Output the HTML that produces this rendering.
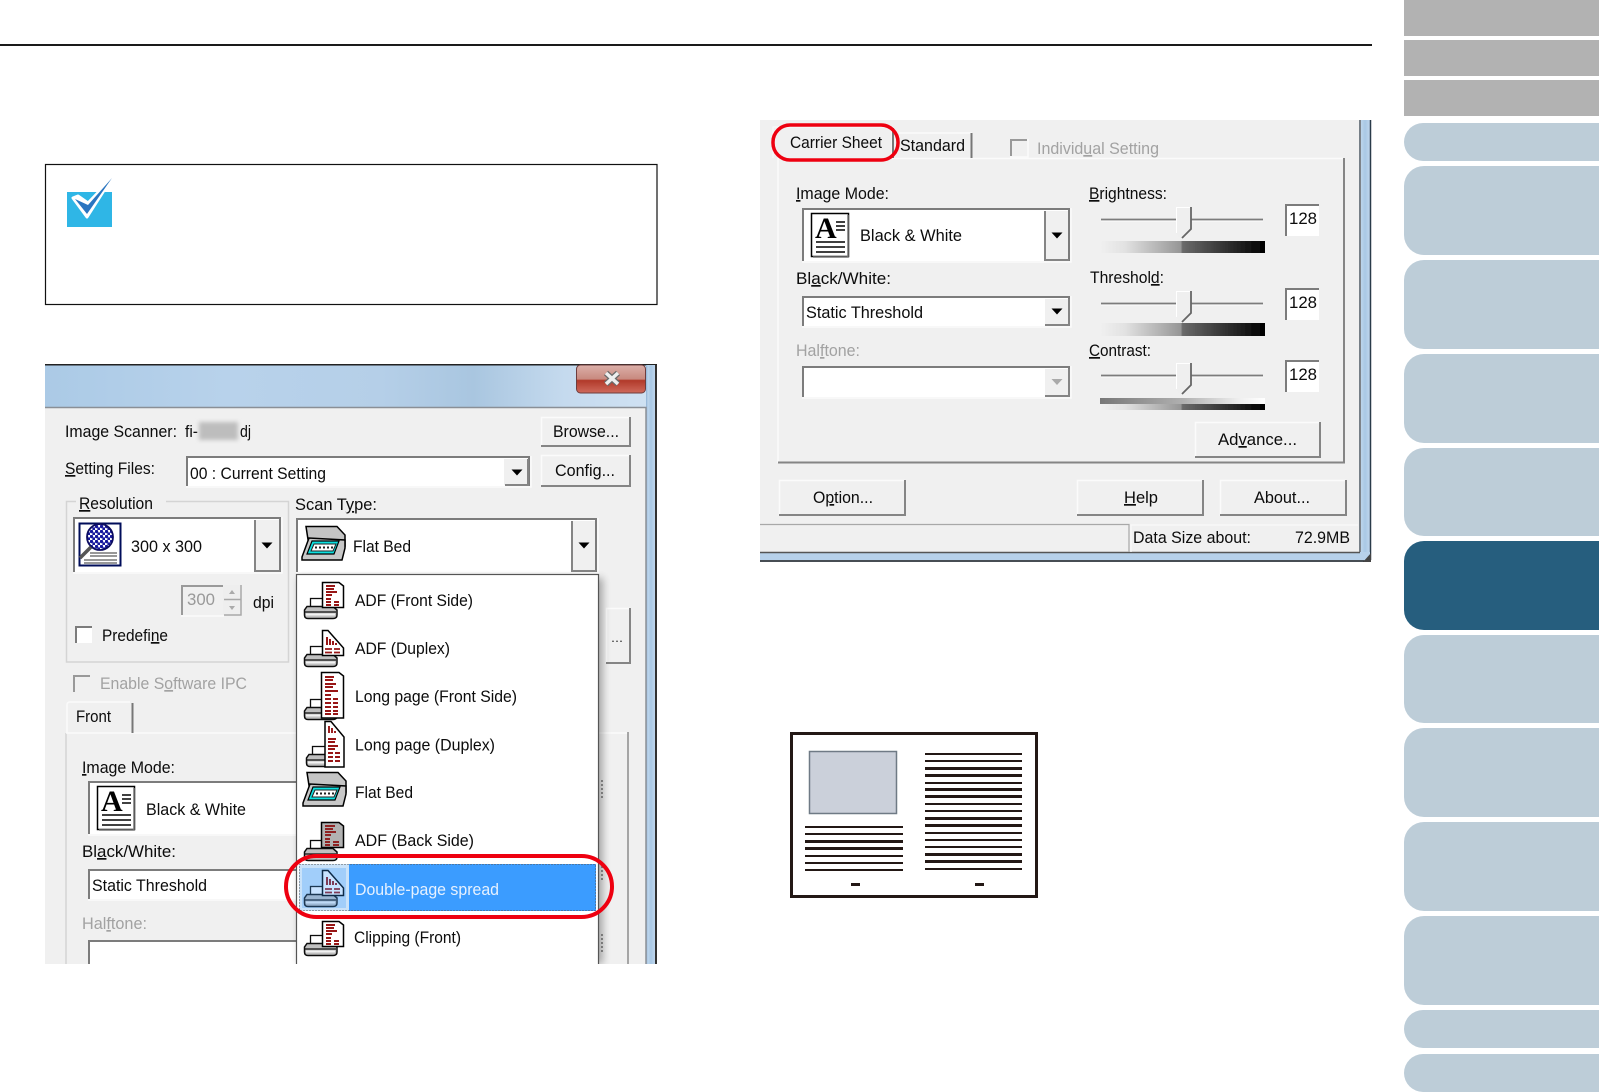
<!DOCTYPE html>
<html><head><meta charset="utf-8"><title>Scan</title>
<style>
html,body{margin:0;padding:0;background:#fff;width:1599px;height:1092px;overflow:hidden}
svg{display:block}
text{font-family:"Liberation Sans",sans-serif;font-size:17px;fill:#080808}
text.g{fill:#a2a2a2}
.f{fill:none;stroke:#7c7c7c;stroke-width:2}
.l{fill:none;stroke:#fbfbfb;stroke-width:1.5}
.d{fill:none;stroke:#858585;stroke-width:2}
.e{fill:none;stroke:#d4d4d4;stroke-width:1.5}
</style></head><body>
<svg xmlns="http://www.w3.org/2000/svg" width="1599" height="1092" viewBox="0 0 1599 1092">
<defs>
<filter id="b" filterUnits="userSpaceOnUse" x="0" y="100" width="1400" height="900"><feGaussianBlur stdDeviation="0.38"/></filter>
<filter id="bb" x="-30%" y="-30%" width="160%" height="160%"><feGaussianBlur stdDeviation="4"/></filter>
<filter id="bs" x="-30%" y="-30%" width="160%" height="160%"><feGaussianBlur stdDeviation="2"/></filter>
<linearGradient id="tg" x1="0" x2="1" y1="0" y2="0"><stop offset="0" stop-color="#abcae6"/><stop offset=".3" stop-color="#b8d2eb"/><stop offset=".55" stop-color="#b5cfe8"/><stop offset=".7" stop-color="#a9c6e0"/><stop offset=".85" stop-color="#c5daee"/><stop offset="1" stop-color="#d0e2f3"/></linearGradient>
<linearGradient id="cg" x1="0" x2="0" y1="0" y2="1"><stop offset="0" stop-color="#dcb0aa"/><stop offset=".5" stop-color="#c88a80"/><stop offset=".55" stop-color="#b1392a"/><stop offset="1" stop-color="#cf6a5c"/></linearGradient>
<linearGradient id="bar" x1="0" x2="1" y1="0" y2="0"><stop offset="0" stop-color="#f0f0f0"/><stop offset=".15" stop-color="#e2e2e2"/><stop offset=".49" stop-color="#969696"/><stop offset=".5" stop-color="#6a6a6a"/><stop offset="1" stop-color="#000"/></linearGradient>
<linearGradient id="bar2" x1="0" x2="1" y1="0" y2="0"><stop offset="0" stop-color="#777"/><stop offset=".5" stop-color="#b0b0b0"/><stop offset=".85" stop-color="#f0f0f0"/><stop offset="1" stop-color="#fff"/></linearGradient>
<linearGradient id="fr" x1="0" x2="1" y1="0" y2="0"><stop offset="0" stop-color="#8fb2d4"/><stop offset=".2" stop-color="#bcd5ec"/><stop offset=".5" stop-color="#a9c8e5"/><stop offset="1" stop-color="#c5daef"/></linearGradient>
<pattern id="dots" width="5" height="5" patternUnits="userSpaceOnUse"><rect width="5" height="5" fill="#fff"/><circle cx="1.5" cy="1.5" r="1.7" fill="#14189c"/><circle cx="4" cy="4" r="1.7" fill="#14189c"/></pattern>

<g id="base"><rect x="6.5" y=".5" width="16" height="9" fill="#fff" stroke="#111" stroke-width="1.300"/><path d="M3 8.500H29L33 12V17Q33 20.500 29 20.500H4Q.5 20.500 .5 17V12Z" fill="#c0c0c0" stroke="#111" stroke-width="1.500"/><path d="M1 14H32" stroke="#111" stroke-width="1.200"/><path d="M2 16.500H31" stroke="#f2f2f2" stroke-width="2"/></g>
<g id="pf"><path d="M.5 .5H17L21.500 4V25.500H.5Z" fill="#fff" stroke="#000" stroke-width="1.500"/><path d="M4 4H13M4 7H12M4 10H15M4 13H10M4 17H9M4 20H9M12 20H17M4 23H9M12 23H17" stroke="#981616" stroke-width="2"/></g>
<g id="pd"><path d="M.5 .5H6L21.500 18V25.500H.5Z" fill="#fff" stroke="#000" stroke-width="1.500"/><path d="M5 7V15M8 9V15M11 11V15M14 13V15" stroke="#981616" stroke-width="2"/><path d="M3 19H10M12 19H18M3 22.500H10M12 22.500H18" stroke="#981616" stroke-width="1.800"/></g>
<g id="flat"><path d="M5 .5H36L44 9L44 20L8 20Z" fill="#c4c4c4" stroke="#000" stroke-width="1.500"/><path d="M8 12L1 31V34H41L44 22V14Z" fill="#c8c8c8" stroke="#000" stroke-width="1.500"/><path d="M11 15H38L33 28H6Z" fill="#0fe0e0" stroke="#000" stroke-width="1.200"/><path d="M13 18H35L32 25H10Z" fill="#fff" stroke="#222"/><path d="M14 21.500H32" stroke="#222" stroke-dasharray="2 2" stroke-width="2"/></g>
<g id="aicon"><rect x=".5" y=".5" width="37" height="43" fill="#fff" stroke="#000" stroke-width="1.500"/><path d="M37 2V44H2" fill="none" stroke="#777" stroke-width="1.500"/><text x="4" y="25" style="font-family:'Liberation Serif',serif;font-weight:bold;font-size:30px;fill:#000">A</text><path d="M25 9H34M25 13H34M25 17H34M5 29H34M5 34H34M5 39H34" stroke="#000" stroke-width="1.500"/></g>
<g id="thumb"><path d="M0 .5H15V22L4 31 0 26Z" fill="#efefef"/><path d="M.5 26V.5H14" fill="none" stroke="#fff"/><path d="M15 0V22L6 31" fill="none" stroke="#666" stroke-width="1.800"/></g>
<path id="arr" d="M-5.500 -2.500H5.500L0 3.500Z" fill="#000"/>
</defs>

<rect width="1599" height="1092" fill="#fff"/>
<rect x="0" y="44" width="1372" height="2" fill="#1a1a1a"/>

<!-- note box -->
<rect x="45.500" y="164.500" width="611.500" height="140" fill="#fff" stroke="#111" stroke-width="1.200"/>
<rect x="67" y="192" width="45" height="35" fill="#2fb6e6"/>
<path d="M73 198L87 217L112 178L88 203L78 196Z" fill="#fff" stroke="#fff" stroke-width="3" stroke-linejoin="round"/>
<path d="M75 199L88 205L112 178L87 214Z" fill="#2a75c0"/>

<!-- left dialog -->
<g filter="url(#b)">
<rect x="45" y="365" width="612" height="42" fill="url(#tg)"/>
<rect x="45" y="364" width="612" height="1.500" fill="#222"/>
<rect x="646" y="365" width="10" height="599" fill="url(#fr)"/>
<rect x="655" y="365" width="2" height="599" fill="#333"/>
<rect x="45" y="407" width="601" height="557" fill="#f0f0f0"/>
<path d="M45 407.500H646V964" fill="none" stroke="#8a8f96" stroke-width="1.500"/>
<rect x="576.500" y="365" width="69" height="28" rx="4" fill="url(#cg)" stroke="#6e3d3d"/>
<path d="M606 373L618 384M618 373L606 384" stroke="#6a6a6a" stroke-width="6"/>
<path d="M606 373L618 384M618 373L606 384" stroke="#eee" stroke-width="3.500"/>

<text x="65" y="437" textLength="112" lengthAdjust="spacingAndGlyphs">Image Scanner:</text>
<text x="185" y="437" textLength="13" lengthAdjust="spacingAndGlyphs">fi-</text>
<rect x="199" y="422" width="39" height="18" fill="#bdbdbd" filter="url(#bs)"/>
<text x="240" y="437" textLength="11" lengthAdjust="spacingAndGlyphs">dj</text>
<text x="65" y="474" textLength="90" lengthAdjust="spacingAndGlyphs"><tspan text-decoration="underline">S</tspan>etting Files:</text>

<rect x="187" y="457" width="342" height="29" fill="#fff"/>
<path class="f" d="M187 486V457H529V486"/><path class="l" d="M186 487H531V456"/>
<rect x="504" y="459" width="24" height="26" fill="#f0f0f0"/><path class="d" d="M505 485H528V459"/>
<use href="#arr" x="517" y="472"/>
<text x="190" y="479" textLength="136" lengthAdjust="spacingAndGlyphs">00 : Current Setting</text>

<rect x="541.500" y="417.500" width="89" height="29" fill="#f0f0f0"/><path class="l" d="M541.500 447V417.500H630"/><path class="d" d="M541 446H630V417"/>
<text x="553" y="437" textLength="66" lengthAdjust="spacingAndGlyphs">Browse...</text>
<rect x="541.500" y="455.500" width="89" height="31" fill="#f0f0f0"/><path class="l" d="M541.500 487V455.500H630"/><path class="d" d="M541 486H630V455"/>
<text x="555" y="476" textLength="60" lengthAdjust="spacingAndGlyphs">Config...</text>

<!-- resolution group -->
<path class="e" d="M76 501.500H66.500V662H288.500V501.500H166"/>
<text x="79" y="509" textLength="74" lengthAdjust="spacingAndGlyphs"><tspan text-decoration="underline">R</tspan>esolution</text>
<rect x="74" y="518" width="207" height="54" fill="#fff"/>
<path class="f" d="M74 572V518H280V572"/><path class="l" d="M73 573H282V517"/>
<rect x="255" y="520" width="24" height="51" fill="#f0f0f0"/><path class="d" d="M255 520V571H280"/>
<use href="#arr" x="267" y="545"/>
<rect x="79.500" y="523.500" width="41" height="42" fill="#fff" stroke="#04085a" stroke-width="2"/>
<path d="M90 553H117M90 556H117M84 560H117M84 563H117" stroke="#333"/>
<circle cx="100" cy="537" r="13" fill="url(#dots)" stroke="#0c0c60" stroke-width="1.800"/>
<path d="M91 547L80 558" stroke="#555" stroke-width="3.500"/>
<text x="131" y="552" textLength="71" lengthAdjust="spacingAndGlyphs">300 x 300</text>
<rect x="182" y="586" width="41" height="29" fill="#f0f0f0"/><path d="M182 615V586H223" fill="none" stroke="#9a9a9a" stroke-width="2"/><path class="l" d="M181 616H224"/>
<text x="187" y="605" textLength="28" lengthAdjust="spacingAndGlyphs" style="fill:#999">300</text>
<rect x="223" y="585" width="18" height="15" fill="#eee"/><rect x="223" y="600" width="18" height="15" fill="#eee"/>
<path d="M241 585V615H224M224 599.500H241" fill="none" stroke="#a8a8a8" stroke-width="1.500"/>
<path d="M232 590L229 594H235ZM232 610L229 606H235Z" fill="#aaa"/>
<text x="253" y="608" textLength="21" lengthAdjust="spacingAndGlyphs">dpi</text>
<rect x="76" y="627" width="16" height="16" fill="#fff"/><path d="M76 643V627H92" fill="none" stroke="#7c7c7c" stroke-width="2"/>
<text x="102" y="641" textLength="66" lengthAdjust="spacingAndGlyphs">Predefi<tspan text-decoration="underline">n</tspan>e</text>

<text x="295" y="510" textLength="82" lengthAdjust="spacingAndGlyphs">Scan T<tspan text-decoration="underline">y</tspan>pe:</text>

<rect x="74" y="676" width="16" height="16" fill="#f0f0f0"/><path d="M74 692V676H90" fill="none" stroke="#999" stroke-width="2"/>
<text x="100" y="689" class="g" textLength="147" lengthAdjust="spacingAndGlyphs">Enable S<tspan text-decoration="underline">o</tspan>ftware IPC</text>

<!-- tab -->
<path class="e" d="M66 964V733"/>
<path d="M66 733H628" stroke="#fafafa" stroke-width="1.500"/>
<path d="M67 733V705Q67 702 70 702H130" fill="none" stroke="#fafafa" stroke-width="1.500"/>
<path d="M132.500 703V733" stroke="#777" stroke-width="2"/>
<text x="76" y="722" textLength="35" lengthAdjust="spacingAndGlyphs">Front</text>
<path d="M628 732V964" stroke="#8c8c8c" stroke-width="1.500"/>

<text x="82" y="773" textLength="93" lengthAdjust="spacingAndGlyphs"><tspan text-decoration="underline">I</tspan>mage Mode:</text>
<rect x="89" y="782" width="210" height="52" fill="#fff"/><path class="f" d="M89 834V782H296"/><path class="l" d="M88 835H296"/>
<use href="#aicon" x="97" y="786"/>
<text x="146" y="815" textLength="100" lengthAdjust="spacingAndGlyphs">Black &amp; White</text>
<text x="82" y="857" textLength="94" lengthAdjust="spacingAndGlyphs">Bl<tspan text-decoration="underline">a</tspan>ck/White:</text>
<rect x="89" y="870" width="210" height="29" fill="#fff"/><path class="f" d="M89 899V870H296"/><path class="l" d="M88 900H296"/>
<text x="92" y="891" textLength="115" lengthAdjust="spacingAndGlyphs">Static Threshold</text>
<text x="82" y="929" class="g" textLength="65" lengthAdjust="spacingAndGlyphs">Hal<tspan text-decoration="underline">f</tspan>tone:</text>
<rect x="89" y="941" width="210" height="23" fill="#fff"/><path class="f" d="M89 964V941H296"/>

<!-- ... button -->
<rect x="606" y="608" width="25" height="55" fill="#f0f0f0"/><path class="l" d="M606.500 663V608.500H630"/><path class="d" d="M606 663H630V608"/>
<text x="611" y="642" textLength="12" lengthAdjust="spacingAndGlyphs" style="font-size:13px;fill:#333">...</text>
<path d="M602 780V800M602 862V882M602 934V954" stroke="#777" stroke-dasharray="2 2" stroke-width="1.500"/>

<!-- scan type combo -->
<rect x="297" y="519" width="300" height="53" fill="#fff"/>
<path class="f" d="M297 572V519H596V572"/><path class="l" d="M296 573H598V518"/>
<rect x="572" y="521" width="23" height="50" fill="#f0f0f0"/><path class="d" d="M572 521V571H596"/>
<use href="#arr" x="584" y="545"/>
<use href="#flat" x="301" y="526"/>
<text x="353" y="552" textLength="58" lengthAdjust="spacingAndGlyphs">Flat Bed</text>

<!-- dropdown -->
<rect x="299" y="578" width="304" height="386" fill="#000" opacity=".3" filter="url(#bb)"/>
<rect x="296.500" y="574.500" width="302" height="400" fill="#fff" stroke="#555" stroke-width="1.200"/>

<use href="#base" x="304" y="598"/><use href="#pf" x="322" y="582"/>
<text x="355" y="606" textLength="118" lengthAdjust="spacingAndGlyphs">ADF (Front Side)</text>
<use href="#base" x="304" y="646"/><use href="#pd" x="322" y="630"/>
<text x="355" y="654" textLength="95" lengthAdjust="spacingAndGlyphs">ADF (Duplex)</text>
<use href="#base" x="304" y="699"/><path d="M321.500 672.500H339L343.500 676V718H321.500Z" fill="#fff" stroke="#000" stroke-width="1.500"/>
<path d="M325 677H334M325 680H333M325 684H336M325 687H333M325 691H338M325 695H331M325 699H331M333 699H338M325 703H331M333 703H338M325 707H331M333 707H338M325 711H331M333 711H338M325 714H331M333 714H338" stroke="#981616" stroke-width="1.900"/>
<text x="355" y="702" textLength="162" lengthAdjust="spacingAndGlyphs">Long page (Front Side)</text>
<use href="#base" x="306" y="746"/><path d="M325 721.500H331L344 737V767H325Z" fill="#fff" stroke="#000" stroke-width="1.500"/>
<path d="M329 726V733M332 728V733M335 731V733M328 739H336M328 742H335M328 746H338M328 749H335M328 753H333M335 753H340M328 757H333M335 757H340M328 761H333M335 761H340" stroke="#981616" stroke-width="1.900"/>
<text x="355" y="750.500" textLength="140" lengthAdjust="spacingAndGlyphs">Long page (Duplex)</text>
<use href="#flat" x="302" y="772"/>
<text x="355" y="798" textLength="58" lengthAdjust="spacingAndGlyphs">Flat Bed</text>
<use href="#base" x="304" y="840"/><path d="M321.500 822.500H339L343.500 826V847.500H321.500Z" fill="#b2b2b2" stroke="#000" stroke-width="1.500"/>
<path d="M325 826H335M325 829H333M325 832H336M325 835H331M325 839H330M325 842H330M333 842H339M325 845H330M333 845H339" stroke="#8a1010" stroke-width="1.800"/>
<text x="355" y="846" textLength="119" lengthAdjust="spacingAndGlyphs">ADF (Back Side)</text>

<rect x="299" y="864" width="297" height="47" fill="#3b9cff"/>
<rect x="299" y="864" width="50" height="47" fill="#c9e2f9"/>
<rect x="299.500" y="864.500" width="296" height="46" fill="none" stroke="#555" stroke-dasharray="1 2"/>
<use href="#base" x="304" y="886"/><use href="#pd" x="322" y="870"/>
<rect x="302" y="868" width="44" height="40" fill="#3b9cff" opacity=".28"/>
<text x="355" y="895" textLength="144" lengthAdjust="spacingAndGlyphs" style="fill:#e6f1ff">Double-page spread</text>

<use href="#base" x="304" y="935"/><use href="#pf" x="322" y="921"/>
<text x="354" y="943" textLength="107" lengthAdjust="spacingAndGlyphs">Clipping (Front)</text>
<rect x="290" y="964" width="330" height="14" fill="#fff"/>
</g>
<rect x="286" y="856" width="326" height="61" rx="30.500" fill="none" stroke="#ee0010" stroke-width="4"/>

<!-- right dialog -->
<g filter="url(#b)">
<rect x="760" y="120" width="600" height="432" fill="#f0f0f0"/>
<rect x="1359" y="120" width="12" height="442" fill="url(#fr)"/>
<path d="M1360 120V552" stroke="#6d6d6d" stroke-width="1.500"/>
<path d="M1370.500 120V560" stroke="#2a3a4a" stroke-width="1.500"/>
<rect x="760" y="552" width="610" height="10" fill="#b7d1ea"/>
<path d="M760 552.500H1360" stroke="#555" stroke-width="1.500"/>
<path d="M760 561H1371" stroke="#222" stroke-width="1.500"/>
<path d="M1371 553V562H1363Z" fill="#444"/>

<!-- group pane -->
<path class="l" d="M778 463V158.500H1343"/>
<path d="M778 462.500H1344V158" fill="none" stroke="#858585" stroke-width="2"/>
<!-- tabs -->
<path d="M773 158V127H892V158" fill="#f0f0f0" stroke="#fbfbfb"/>
<text x="790" y="148" textLength="92" lengthAdjust="spacingAndGlyphs">Carrier Sheet</text>
<path d="M893 128V158" stroke="#777" stroke-width="2"/>
<path d="M899 133H972" stroke="#fbfbfb" stroke-width="1.500"/>
<path d="M971.500 133V158" stroke="#777" stroke-width="2"/>
<text x="900" y="151" textLength="65" lengthAdjust="spacingAndGlyphs">Standard</text>
<rect x="1011" y="140" width="16" height="16" fill="#f0f0f0"/><path d="M1011 156V140H1027" fill="none" stroke="#999" stroke-width="2"/><path class="l" d="M1010 157H1028V139"/>
<text x="1037" y="154" class="g" textLength="122" lengthAdjust="spacingAndGlyphs">Individ<tspan text-decoration="underline">u</tspan>al Setting</text>

<text x="796" y="199" textLength="93" lengthAdjust="spacingAndGlyphs"><tspan text-decoration="underline">I</tspan>mage Mode:</text>
<rect x="803" y="209" width="266" height="52" fill="#fff"/><path class="f" d="M803 261V209H1069V261"/><path class="l" d="M802 262H1071V208"/>
<rect x="1045" y="211" width="23" height="49" fill="#f0f0f0"/><path class="d" d="M1045 211V260H1069"/>
<use href="#arr" x="1057" y="235"/>
<use href="#aicon" x="811" y="213"/>
<text x="860" y="241" textLength="102" lengthAdjust="spacingAndGlyphs">Black &amp; White</text>

<text x="796" y="284" textLength="95" lengthAdjust="spacingAndGlyphs">Bl<tspan text-decoration="underline">a</tspan>ck/White:</text>
<rect x="803" y="297" width="266" height="29" fill="#fff"/><path class="f" d="M803 326V297H1069V326"/><path class="l" d="M802 327H1071V296"/>
<rect x="1045" y="299" width="23" height="26" fill="#f0f0f0"/><path class="d" d="M1045 325H1069V299"/>
<use href="#arr" x="1057" y="311"/>
<text x="806" y="318" textLength="117" lengthAdjust="spacingAndGlyphs">Static Threshold</text>

<text x="796" y="356" class="g" textLength="64" lengthAdjust="spacingAndGlyphs">Hal<tspan text-decoration="underline">f</tspan>tone:</text>
<rect x="803" y="367" width="266" height="30" fill="#fff"/><path class="f" d="M803 397V367H1069V397"/><path class="l" d="M802 398H1071V366"/>
<rect x="1045" y="369" width="23" height="27" fill="#f0f0f0"/><path class="d" d="M1045 396H1069V369"/>
<path d="M1051.500 379H1062.500L1057 385Z" fill="#aaa"/>

<text x="1089" y="199" textLength="78" lengthAdjust="spacingAndGlyphs"><tspan text-decoration="underline">B</tspan>rightness:</text>
<path d="M1101 219.500H1263" stroke="#7c7c7c" stroke-width="1.800"/><path d="M1101 221H1263" stroke="#fbfbfb"/>
<use href="#thumb" x="1176" y="207"/>
<rect x="1100" y="241" width="165" height="12" fill="url(#bar)"/>
<rect x="1286" y="205" width="33" height="31" fill="#fff"/><path class="f" d="M1286 236V205H1319"/>
<text x="1289" y="224" textLength="28" lengthAdjust="spacingAndGlyphs">128</text>

<text x="1090" y="283" textLength="74" lengthAdjust="spacingAndGlyphs">Threshol<tspan text-decoration="underline">d</tspan>:</text>
<path d="M1101 303.500H1263" stroke="#7c7c7c" stroke-width="1.800"/><path d="M1101 305H1263" stroke="#fbfbfb"/>
<use href="#thumb" x="1176" y="291"/>
<rect x="1100" y="323" width="165" height="13" fill="url(#bar)"/>
<rect x="1286" y="289" width="33" height="31" fill="#fff"/><path class="f" d="M1286 320V289H1319"/>
<text x="1289" y="308" textLength="28" lengthAdjust="spacingAndGlyphs">128</text>

<text x="1089" y="356" textLength="62" lengthAdjust="spacingAndGlyphs"><tspan text-decoration="underline">C</tspan>ontrast:</text>
<path d="M1101 375.500H1263" stroke="#7c7c7c" stroke-width="1.800"/><path d="M1101 377H1263" stroke="#fbfbfb"/>
<use href="#thumb" x="1176" y="363"/>
<rect x="1100" y="398" width="165" height="6" fill="url(#bar2)"/>
<rect x="1100" y="404" width="165" height="6" fill="url(#bar)"/>
<rect x="1286" y="361" width="33" height="31" fill="#fff"/><path class="f" d="M1286 392V361H1319"/>
<text x="1289" y="380" textLength="28" lengthAdjust="spacingAndGlyphs">128</text>

<rect x="1195.500" y="422.500" width="125" height="34" fill="#f0f0f0"/><path class="l" d="M1195.500 457V422.500H1320"/><path class="d" d="M1195 457H1320V422"/>
<text x="1218" y="445" textLength="79" lengthAdjust="spacingAndGlyphs">Ad<tspan text-decoration="underline">v</tspan>ance...</text>

<rect x="779.500" y="480.500" width="126" height="35" fill="#f0f0f0"/><path class="l" d="M779.500 516V480.500H905"/><path class="d" d="M779 515H905V480"/>
<text x="813" y="503" textLength="60" lengthAdjust="spacingAndGlyphs">O<tspan text-decoration="underline">p</tspan>tion...</text>
<rect x="1077.500" y="480.500" width="126" height="35" fill="#f0f0f0"/><path class="l" d="M1077.500 516V480.500H1203"/><path class="d" d="M1077 515H1203V480"/>
<text x="1124" y="503" textLength="34" lengthAdjust="spacingAndGlyphs"><tspan text-decoration="underline">H</tspan>elp</text>
<rect x="1220.500" y="480.500" width="126" height="35" fill="#f0f0f0"/><path class="l" d="M1220.500 516V480.500H1346"/><path class="d" d="M1220 515H1346V480"/>
<text x="1254" y="503" textLength="56" lengthAdjust="spacingAndGlyphs">About...</text>

<path d="M760 524.500H1129V552" fill="none" stroke="#a8a8a8" stroke-width="1.200"/>
<path d="M1131 552V525H1358" fill="none" stroke="#fafafa" stroke-width="1.200"/>
<text x="1133" y="543" textLength="118" lengthAdjust="spacingAndGlyphs">Data Size about:</text>
<text x="1295" y="543" textLength="55" lengthAdjust="spacingAndGlyphs">72.9MB</text>
</g>
<rect x="773" y="125" width="125" height="35" rx="17" fill="none" stroke="#ee0010" stroke-width="3.500"/>

<!-- diagram -->
<rect x="791.500" y="733.500" width="245" height="163" fill="#fff" stroke="#231815" stroke-width="3"/>
<rect x="809.500" y="751.500" width="87" height="62" fill="#cbd0da" stroke="#6f7a85" stroke-width="1.500"/>
<g fill="#231815">
<rect x="805" y="826" width="98" height="2"/><rect x="805" y="833" width="98" height="2"/><rect x="805" y="840" width="98" height="3"/><rect x="805" y="847" width="98" height="3"/><rect x="805" y="855" width="98" height="2"/><rect x="805" y="862" width="98" height="2"/><rect x="805" y="869" width="98" height="2"/>
<rect x="925" y="753" width="97" height="2"/><rect x="925" y="760" width="97" height="2"/><rect x="925" y="767" width="97" height="3"/><rect x="925" y="774" width="97" height="3"/><rect x="925" y="782" width="97" height="2"/><rect x="925" y="788" width="97" height="3"/><rect x="925" y="795" width="97" height="3"/><rect x="925" y="803" width="97" height="2"/><rect x="925" y="810" width="97" height="2"/><rect x="925" y="817" width="97" height="3"/><rect x="925" y="824" width="97" height="3"/><rect x="925" y="832" width="97" height="2"/><rect x="925" y="839" width="97" height="2"/><rect x="925" y="846" width="97" height="2"/><rect x="925" y="853" width="97" height="3"/><rect x="925" y="860" width="97" height="3"/><rect x="925" y="868" width="97" height="2"/>
<rect x="851" y="883" width="9" height="3"/><rect x="975" y="883" width="9" height="3"/>
</g>

<!-- sidebar -->
<g fill="#b2b2b2"><rect x="1404" y="0" width="195" height="36"/><rect x="1404" y="40" width="195" height="36"/><rect x="1404" y="80" width="195" height="36"/></g>
<g fill="#bdcdd8">
<path d="M1599 123H1423A19 19 0 0 0 1423 161H1599Z"/>
<path d="M1599 166H1424A20 20 0 0 0 1404 186V235A20 20 0 0 0 1424 255H1599Z"/>
<path d="M1599 260H1424A20 20 0 0 0 1404 280V329A20 20 0 0 0 1424 349H1599Z"/>
<path d="M1599 354H1424A20 20 0 0 0 1404 374V423A20 20 0 0 0 1424 443H1599Z"/>
<path d="M1599 448H1424A20 20 0 0 0 1404 468V516A20 20 0 0 0 1424 536H1599Z"/>
<path d="M1599 635H1424A20 20 0 0 0 1404 655V703A20 20 0 0 0 1424 723H1599Z"/>
<path d="M1599 728H1424A20 20 0 0 0 1404 748V797A20 20 0 0 0 1424 817H1599Z"/>
<path d="M1599 822H1424A20 20 0 0 0 1404 842V891A20 20 0 0 0 1424 911H1599Z"/>
<path d="M1599 916H1424A20 20 0 0 0 1404 936V985A20 20 0 0 0 1424 1005H1599Z"/>
<path d="M1599 1010H1423A19 19 0 0 0 1423 1048H1599Z"/>
<path d="M1599 1054H1423A19 19 0 0 0 1423 1092H1599Z"/>
</g>
<path d="M1599 541H1424A20 20 0 0 0 1404 561V610A20 20 0 0 0 1424 630H1599Z" fill="#265e7e"/>
</svg>
</body></html>
